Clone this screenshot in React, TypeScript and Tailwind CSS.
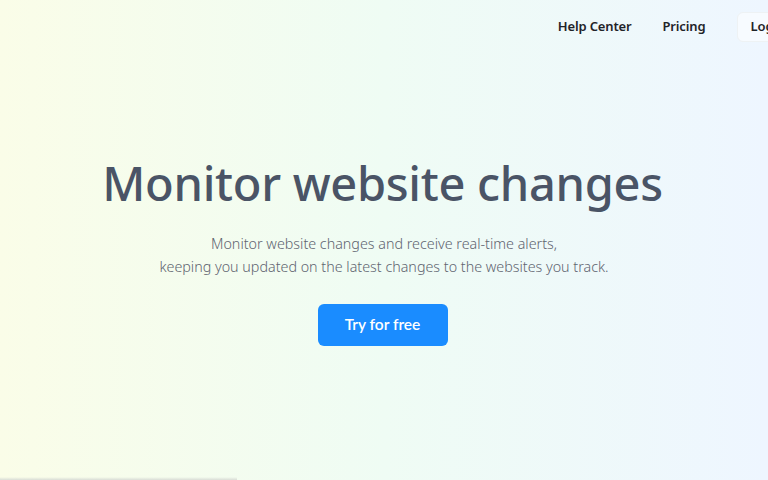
export default function App() {
  return (
    <div className="relative h-[480px] w-full overflow-hidden bg-gradient-to-r from-[#fafde8] via-[#effcf4] to-[#eef6ff] font-['Noto_Sans',sans-serif]">
      <header className="flex h-[52px] items-center justify-end pt-[2px]">
        <nav className="-mr-[34px] flex items-center gap-8 text-[13px] font-semibold text-[#1f2328]">
          <a href="#" className="tracking-[-0.15px]">Help Center</a>
          <a href="#" className="-ml-[1px] tracking-[-0.15px]">Pricing</a>
          <button
            type="button"
            className="rounded-md border border-[#eef2f4] bg-white/50 px-3 py-[4px] font-semibold"
          >
            Log in
          </button>
        </nav>
      </header>

      <main className="flex flex-col items-center pt-[103px] text-center">
        <h1 className="-ml-[3px] text-[47px] font-medium leading-[56px] tracking-[-0.3px] text-[#4a5466]">
          Monitor website changes
        </h1>
        <p className="mt-[21px] text-[14.3px] font-light leading-[23px] text-[#5f6470]">
          Monitor website changes and receive real-time alerts,
          <br />
          keeping you updated on the latest changes to the websites you track.
        </p>
        <button
          type="button"
          className="-ml-[3px] mt-[26px] flex h-[42px] w-[130px] items-center justify-center rounded-md bg-[#1a8cff] font-['Lato',sans-serif] text-[15.5px] font-semibold text-white"
        >
          Try for free
        </button>
      </main>

      <div className="absolute bottom-0 left-0 h-[3px] w-[237px] bg-gradient-to-b from-transparent to-[#d9ddd6]" />
    </div>
  );
}
